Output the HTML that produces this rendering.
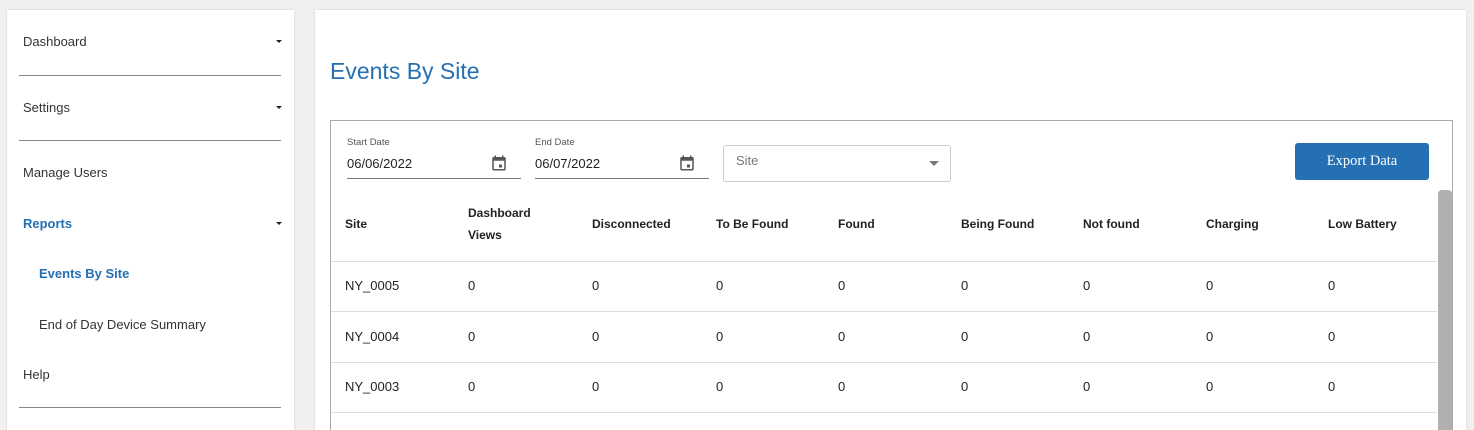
<!DOCTYPE html>
<html><head><style>
*{box-sizing:border-box;margin:0;padding:0}
body{width:1474px;height:424px;background:#f0f0f0;font-family:"Liberation Sans",sans-serif;overflow:hidden;position:relative;color:#333}
.side{position:absolute;left:7px;top:10px;width:287px;height:420px;background:#fff;box-shadow:0 0 2px rgba(0,0,0,.15)}
.car{position:absolute;width:0;height:0;border-left:3.5px solid transparent;border-right:3.5px solid transparent;border-top:3.5px solid #222}
.blue{color:#2470b3!important;font-weight:bold}
.main{position:absolute;left:315px;top:10px;width:1151px;height:420px;background:#fff;box-shadow:0 0 2px rgba(0,0,0,.15)}
h1{position:absolute;left:330px;top:58px;font-size:23px;font-weight:normal;color:#2470b3}
.box{position:absolute;left:330px;top:120px;width:1123px;height:310px;border:1px solid #aaa;border-bottom:none}
.t{position:absolute;font-size:12.5px;color:#222}
.lbl{position:absolute;font-size:9.5px;color:#555}
.fld{position:absolute;top:178px;border-top:1px solid #777;height:0}
.th{position:absolute;font-size:12px;font-weight:bold;color:#222;line-height:22px}
.row{position:absolute;left:331px;width:1106px;border-top:1px solid #ddd}
.td{position:absolute;font-size:13px;color:#222}
</style></head><body>
<div class="side"></div>
<div style="position:absolute;left:23px;top:34px;font-size:13px">Dashboard</div>
<div class="car" style="left:276px;top:40px"></div>
<div style="position:absolute;left:19px;top:75px;width:262px;border-top:1px solid #888"></div>
<div style="position:absolute;left:23px;top:100px;font-size:13px">Settings</div>
<div class="car" style="left:276px;top:106px"></div>
<div style="position:absolute;left:19px;top:140px;width:262px;border-top:1px solid #888"></div>
<div style="position:absolute;left:23px;top:165px;font-size:13px">Manage Users</div>
<div class="blue" style="position:absolute;left:23px;top:216px;font-size:13px">Reports</div>
<div class="car" style="left:276px;top:222px"></div>
<div class="blue" style="position:absolute;left:39px;top:266px;font-size:13px">Events By Site</div>
<div style="position:absolute;left:39px;top:317px;font-size:13px">End of Day Device Summary</div>
<div style="position:absolute;left:23px;top:367px;font-size:13px">Help</div>
<div style="position:absolute;left:19px;top:407px;width:262px;border-top:1px solid #888"></div>

<div class="main"></div>
<h1>Events By Site</h1>
<div class="box"></div>
<div class="lbl" style="left:347px;top:137px">Start Date</div>
<div class="t" style="left:347px;top:156px;font-size:13px">06/06/2022</div>
<svg style="position:absolute;left:490px;top:154px" width="18" height="18" viewBox="0 0 24 24"><path fill="#555" d="M19 4h-1V2h-2v2H8V2H6v2H5c-1.1 0-2 .9-2 2v14c0 1.1.9 2 2 2h14c1.1 0 2-.9 2-2V6c0-1.1-.9-2-2-2zm0 16H5V9h14v11zM12 14h4v4h-4z"/></svg>
<div class="fld" style="left:347px;width:174px"></div>
<div class="lbl" style="left:535px;top:137px">End Date</div>
<div class="t" style="left:535px;top:156px;font-size:13px">06/07/2022</div>
<svg style="position:absolute;left:678px;top:154px" width="18" height="18" viewBox="0 0 24 24"><path fill="#555" d="M19 4h-1V2h-2v2H8V2H6v2H5c-1.1 0-2 .9-2 2v14c0 1.1.9 2 2 2h14c1.1 0 2-.9 2-2V6c0-1.1-.9-2-2-2zm0 16H5V9h14v11zM12 14h4v4h-4z"/></svg>
<div class="fld" style="left:535px;width:174px"></div>
<div style="position:absolute;left:723px;top:145px;width:228px;height:37px;border:1px solid #ccc;border-radius:3px"></div>
<div class="t" style="left:736px;top:153px;color:#777;font-size:13px">Site</div>
<div style="position:absolute;left:929px;top:161px;border-left:5px solid transparent;border-right:5px solid transparent;border-top:5px solid #777"></div>
<div style="position:absolute;left:1295px;top:143px;width:134px;height:37px;background:#2470b3;border-radius:3px;color:#fff;font-family:'Liberation Serif',serif;font-size:14.5px;text-align:center;line-height:37px">Export Data</div>
<div style="position:absolute;left:1438px;top:190px;width:14px;height:240px;background:#b0b0b0;border-radius:4px 4px 0 0"></div>

<div class="th" style="left:345px;top:213px">Site</div>
<div class="th" style="left:468px;top:202px">Dashboard<br>Views</div>
<div class="th" style="left:592px;top:213px">Disconnected</div>
<div class="th" style="left:716px;top:213px">To Be Found</div>
<div class="th" style="left:838px;top:213px">Found</div>
<div class="th" style="left:961px;top:213px">Being Found</div>
<div class="th" style="left:1083px;top:213px">Not found</div>
<div class="th" style="left:1206px;top:213px">Charging</div>
<div class="th" style="left:1328px;top:213px">Low Battery</div>
<div class="row" style="top:261px"></div>
<div class="row" style="top:311px"></div>
<div class="row" style="top:362px"></div>
<div class="row" style="top:412px"></div>

<div class="td" style="left:345px;top:278px">NY_0005</div>
<div class="td" style="left:345px;top:329px">NY_0004</div>
<div class="td" style="left:345px;top:379px">NY_0003</div>
<div id="z"></div>
<script>
var xs=[468,592,716,838,961,1083,1206,1328],ys=[278,329,379],h='';
ys.forEach(function(y){xs.forEach(function(x){h+='<div class="td" style="left:'+x+'px;top:'+y+'px">0</div>';});});
document.getElementById('z').innerHTML=h;
</script>
</body></html>
